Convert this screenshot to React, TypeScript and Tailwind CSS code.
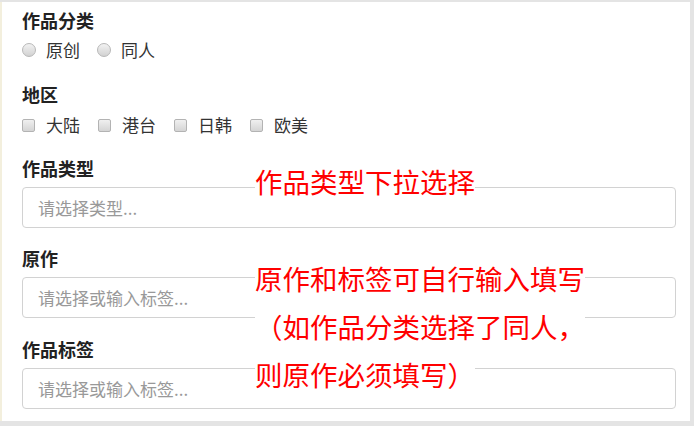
import React from "react";

const FONT = { fontFamily: '"Microsoft YaHei", "Noto Sans CJK SC", "Noto Sans", sans-serif' };

function Radio({ label }: { label: string }) {
  return (
    <label className="flex items-center mr-[17px]">
      <span className="w-[14px] h-[14px] rounded-full border border-[#b8b8b8] bg-gradient-to-b from-[#f2f2f2] to-[#d2d2d2] mr-[10px]" />
      <span className="text-[17px] text-[#333]">{label}</span>
    </label>
  );
}

function Check({ label }: { label: string }) {
  return (
    <label className="flex items-center mr-[18px]">
      <span className="w-[13px] h-[13px] rounded-[2px] border border-[#b3b3b3] bg-gradient-to-b from-[#f0f0f0] to-[#d4d4d4] mr-[11px]" />
      <span className="text-[17px] text-[#333]">{label}</span>
    </label>
  );
}

function Field({ placeholder }: { placeholder: string }) {
  return (
    <div className="h-[41px] rounded-[4px] border border-[#d2d2d2] bg-white flex items-center pl-[15px] text-[17px] text-[#999]">
      {placeholder}
    </div>
  );
}

function Label({ children, className = "" }: { children: React.ReactNode; className?: string }) {
  return <div className={`h-[24px] leading-[24px] text-[18px] font-bold text-[#222] ${className}`}>{children}</div>;
}

export default function App() {
  return (
    <div className="w-[694px] h-[426px] bg-[#e4e4e4] pt-[2px] pr-[4px] pb-[5px] flex" style={FONT}>
      <div className="w-[2px] bg-[#f3efdd]" />
      <div className="flex-1 bg-white relative pl-[20px] pr-[14px] pt-[6px]">
        <Label>作品分类</Label>
        <div className="mt-[6px] h-[24px] flex items-center">
          <Radio label="原创" />
          <Radio label="同人" />
        </div>

        <Label className="mt-[20px]">地区</Label>
        <div className="mt-[7px] h-[24px] flex items-center">
          <Check label="大陆" />
          <Check label="港台" />
          <Check label="日韩" />
          <Check label="欧美" />
        </div>

        <Label className="mt-[19px]">作品类型</Label>
        <div className="mt-[7px]">
          <Field placeholder="请选择类型..." />
        </div>

        <Label className="mt-[18px]">原作</Label>
        <div className="mt-[7px]">
          <Field placeholder="请选择或输入标签..." />
        </div>

        <Label className="mt-[19px]">作品标签</Label>
        <div className="mt-[7px]">
          <Field placeholder="请选择或输入标签..." />
        </div>

        {/* annotations */}
        <div className="absolute left-[253px] top-[155px] text-[27.5px] leading-[48px] text-[#ff0000]">
          <span className="bg-white">作品类型下拉选择</span>
        </div>
        <div className="absolute left-[253px] top-[252px] text-[27.5px] leading-[48px] text-[#ff0000] whitespace-nowrap">
          <span className="bg-white">原作和标签可自行输入填写</span>
          <br />
          <span className="bg-white">（如作品分类选择了同人，</span>
          <br />
          <span className="bg-white">则原作必须填写）</span>
        </div>
      </div>
    </div>
  );
}
